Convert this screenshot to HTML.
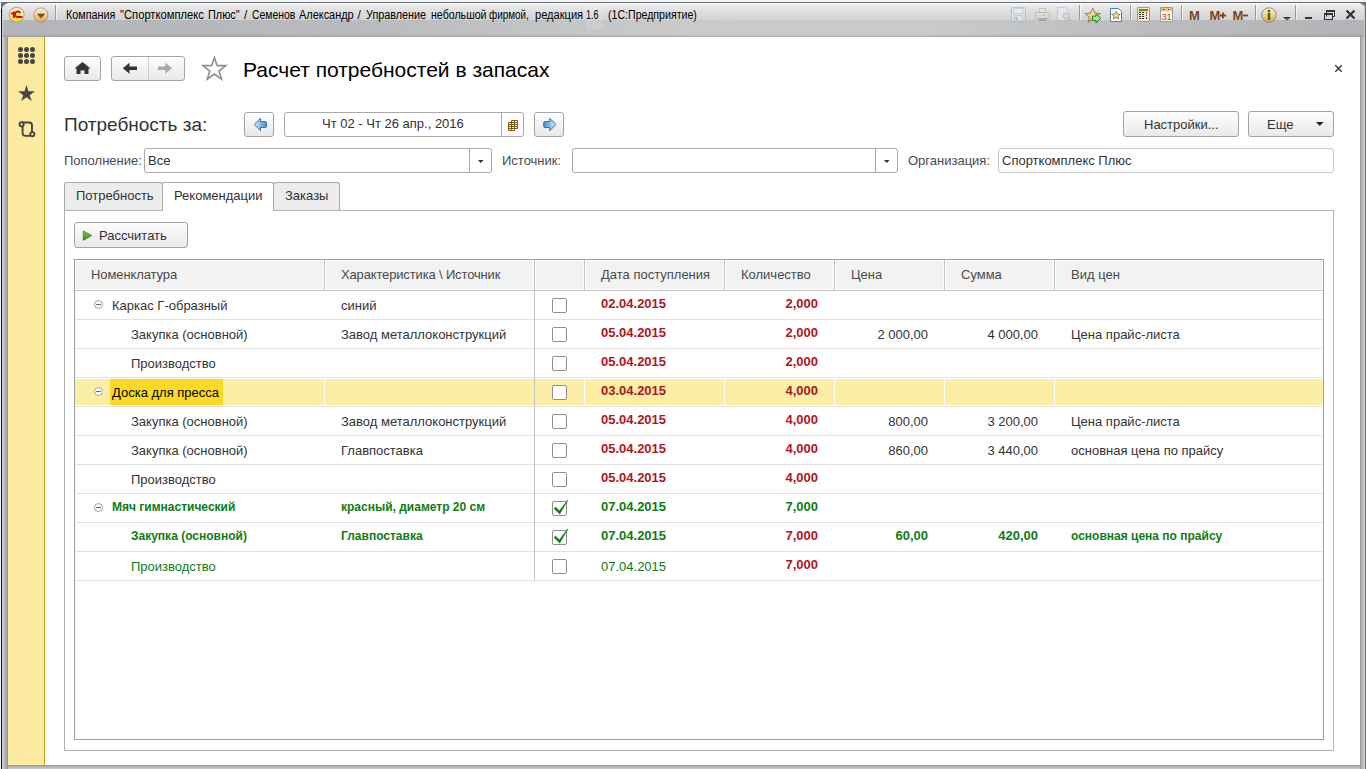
<!DOCTYPE html>
<html><head><meta charset="utf-8">
<style>
*{box-sizing:border-box;margin:0;padding:0}
html,body{width:1366px;height:769px;overflow:hidden;background:#eef3fa;font-family:"Liberation Sans",sans-serif;position:relative}
.a{position:absolute}
.t{position:absolute;white-space:nowrap;line-height:1}
#frame{left:2px;top:2px;width:1364px;height:767px;background:linear-gradient(90deg,#d2d2d2 0,#d2d2d2 1px,#c2c2c2 1px,#c2c2c2 2px,#b8b8b8 2px,#b8b8b8 3px,#b0b0b0 3px,#b0b0b0 4px,#a6a6a6 4px,#a6a6a6 5px,#979797 5px,#979797 6px,#b9babd 6px,#b9babd 1358px,#9a9a9a 1358px,#9a9a9a 1359px,#b0b0b0 1359px,#b0b0b0 1360px,#bababa 1360px,#bababa 1361px,#c4c4c4 1361px,#c4c4c4 1362px,#c8c8c8 1362px,#c8c8c8 1363px,#6e6e6e 1363px);border-top:1px solid #6e6e6e;border-radius:7px 7px 0 0}
#lline{left:1px;top:2px;width:1px;height:767px;background:#111}
#corner{left:1px;top:2px;width:7px;height:7px;background:#707070}
#corner2{left:1358px;top:2px;width:8px;height:8px;background:#6e6e6e}
#fbot{left:8px;top:765px;width:1352px;height:4px;background:linear-gradient(#9a9a9c 0,#a4a5a7 1px,#b4b5b7 2px,#c2c3c5 3px,#c8c9cb 4px)}
#tbar{left:3px;top:3px;width:1361px;height:34px;border-radius:6px 6px 0 0;background:linear-gradient(#fbfbfb 0,#e8e8e8 3px,#dcdcdc 10px,#d3d3d4 17px,transparent 17px),linear-gradient(90deg,#b4b5b8 0,#b9babd 25%,#c3c4c5 40%,#cbcbcb 52%,#cacacb 68%,#bdbec0 82%,#b2b3b6 100%)}
#tshade{left:3px;top:34px;width:1361px;height:3px;background:linear-gradient(rgba(0,0,0,0),rgba(0,0,0,0.13))}
#content{left:8px;top:37px;width:1352px;height:728px;background:#fff}
#side{left:8px;top:37px;width:36px;height:728px;background:#fbeaa0;border-right:1px solid #bea31a;width:37px}
.btn{position:absolute;border:1px solid #a4a4a4;border-radius:3px;background:linear-gradient(#fdfdfd,#e9e9e9)}
.inp{position:absolute;border:1px solid #a9a9a9;border-radius:3px;background:#fff}
.lbl{position:absolute;white-space:nowrap;font-size:13px;color:#4a4a4a;line-height:1}
.sep{position:absolute;width:1px;background:#a0a0a0}
</style></head><body>
<div id="lline" class="a"></div>
<div id="corner" class="a"></div>
<div id="corner2" class="a"></div>
<div id="frame" class="a"></div>
<div id="tbar" class="a"></div>
<div id="tshade" class="a"></div>
<div id="fbot" class="a"></div>
<div id="content" class="a"></div>
<div id="side" class="a"></div>

<!-- title bar -->
<div class="a" style="left:586px;top:7px;width:17px;height:22px;background:rgba(255,255,255,0.12)"></div>
<div class="t" style="left:66.1px;top:9px;font-size:12px;color:#000;transform:scaleX(0.9);transform-origin:0 0">Компания</div>
<div class="t" style="left:119.8px;top:9px;font-size:12px;color:#000;transform:scaleX(0.934);transform-origin:0 0">"Спорткомплекс</div>
<div class="t" style="left:208.1px;top:9px;font-size:12px;color:#000;transform:scaleX(0.907);transform-origin:0 0">Плюс"</div>
<div class="t" style="left:244.0px;top:9px;font-size:12px;color:#000;transform:scaleX(1.0);transform-origin:0 0">/</div>
<div class="t" style="left:251.5px;top:9px;font-size:12px;color:#000;transform:scaleX(0.868);transform-origin:0 0">Семенов</div>
<div class="t" style="left:299.0px;top:9px;font-size:12px;color:#000;transform:scaleX(0.911);transform-origin:0 0">Александр</div>
<div class="t" style="left:357.5px;top:9px;font-size:12px;color:#000;transform:scaleX(1.0);transform-origin:0 0">/</div>
<div class="t" style="left:365.8px;top:9px;font-size:12px;color:#000;transform:scaleX(0.901);transform-origin:0 0">Управление</div>
<div class="t" style="left:430.5px;top:9px;font-size:12px;color:#000;transform:scaleX(0.885);transform-origin:0 0">небольшой</div>
<div class="t" style="left:489.0px;top:9px;font-size:12px;color:#000;transform:scaleX(0.825);transform-origin:0 0">фирмой,</div>
<div class="t" style="left:535.2px;top:9px;font-size:12px;color:#000;transform:scaleX(0.923);transform-origin:0 0">редакция</div>
<div class="t" style="left:586.1px;top:9px;font-size:12px;color:#000;transform:scaleX(0.753);transform-origin:0 0">1.6</div>
<div class="t" style="left:607.6px;top:9px;font-size:12px;color:#000;transform:scaleX(0.883);transform-origin:0 0">(1С:Предприятие)</div>

<!-- form header -->
<div class="btn" style="left:64px;top:56px;width:37px;height:25px"></div>
<div class="btn" style="left:111px;top:56px;width:74px;height:25px"></div>
<div class="a" style="left:148px;top:57px;width:1px;height:23px;background:#cfcfcf"></div>
<div class="t" style="left:243px;top:59px;font-size:21px;color:#000">Расчет потребностей в запасах</div>

<div class="t" style="left:64px;top:115px;font-size:19px;color:#333">Потребность за:</div>
<div class="btn" style="left:244px;top:112px;width:30px;height:25px"></div>
<div class="inp" style="left:284px;top:112px;width:240px;height:25px"></div>
<div class="a" style="left:501px;top:113px;width:1px;height:23px;background:#a9a9a9"></div>
<div class="t" style="left:322px;top:117px;font-size:13px;color:#333">Чт 02 - Чт 26 апр., 2016</div>
<div class="btn" style="left:534px;top:112px;width:30px;height:25px"></div>
<div class="btn" style="left:1123px;top:111px;width:116px;height:26px"></div>
<div class="t" style="left:1144px;top:118px;font-size:13px;color:#333">Настройки...</div>
<div class="btn" style="left:1248px;top:111px;width:86px;height:26px"></div>
<div class="t" style="left:1267px;top:118px;font-size:13px;color:#333">Еще</div>

<div class="lbl" style="left:64px;top:154px">Пополнение:</div>
<div class="inp" style="left:144px;top:148px;width:348px;height:25px"></div>
<div class="a" style="left:469px;top:149px;width:1px;height:23px;background:#a9a9a9"></div>
<div class="t" style="left:148px;top:154px;font-size:13px;color:#333">Все</div>
<div class="lbl" style="left:502px;top:154px">Источник:</div>
<div class="inp" style="left:572px;top:148px;width:326px;height:25px"></div>
<div class="a" style="left:875px;top:149px;width:1px;height:23px;background:#a9a9a9"></div>
<div class="lbl" style="left:908px;top:154px">Организация:</div>
<div class="inp" style="left:998px;top:148px;width:336px;height:25px;border-color:#c8c8c8"></div>
<div class="t" style="left:1002px;top:154px;font-size:13px;color:#333">Спорткомплекс Плюс</div>

<!-- tabs & panel -->
<div class="a" style="left:64px;top:210px;width:1270px;height:541px;border:1px solid #b2b2b2"></div>


<div class="a" style="left:64px;top:182px;width:99px;height:28px;background:#ececec;border:1px solid #a9a9a9;border-bottom:none;border-radius:3px 3px 0 0"></div>
<div class="t" style="left:76px;top:189px;font-size:13px;color:#333">Потребность</div>
<div class="a" style="left:273px;top:182px;width:67px;height:28px;background:#ececec;border:1px solid #a9a9a9;border-bottom:none;border-radius:3px 3px 0 0"></div>
<div class="t" style="left:285px;top:189px;font-size:13px;color:#333">Заказы</div>
<div class="a" style="left:162px;top:182px;width:112px;height:29px;background:#fff;border:1px solid #a9a9a9;border-bottom:none;border-radius:3px 3px 0 0"></div>
<div class="t" style="left:174px;top:189px;font-size:13px;color:#333">Рекомендации</div>
<div class="btn" style="left:74px;top:222px;width:114px;height:26px"></div>
<div class="t" style="left:99px;top:229px;font-size:13px;color:#333">Рассчитать</div>
<!-- table -->
<div class="a" style="left:74px;top:259px;width:1250px;height:481px;border:1px solid #a0a0a0"></div>
<!-- TABLE START -->
<div class="a" style="left:76px;top:261px;width:247px;height:28px;background:#f2f2f2"></div>
<div class="a" style="left:326px;top:261px;width:207px;height:28px;background:#f2f2f2"></div>
<div class="a" style="left:324px;top:260px;width:1px;height:30px;background:#c4c4c4"></div>
<div class="a" style="left:536px;top:261px;width:47px;height:28px;background:#f2f2f2"></div>
<div class="a" style="left:534px;top:260px;width:1px;height:30px;background:#c4c4c4"></div>
<div class="a" style="left:586px;top:261px;width:137px;height:28px;background:#f2f2f2"></div>
<div class="a" style="left:584px;top:260px;width:1px;height:30px;background:#c4c4c4"></div>
<div class="a" style="left:726px;top:261px;width:107px;height:28px;background:#f2f2f2"></div>
<div class="a" style="left:724px;top:260px;width:1px;height:30px;background:#c4c4c4"></div>
<div class="a" style="left:836px;top:261px;width:107px;height:28px;background:#f2f2f2"></div>
<div class="a" style="left:834px;top:260px;width:1px;height:30px;background:#c4c4c4"></div>
<div class="a" style="left:946px;top:261px;width:107px;height:28px;background:#f2f2f2"></div>
<div class="a" style="left:944px;top:260px;width:1px;height:30px;background:#c4c4c4"></div>
<div class="a" style="left:1056px;top:261px;width:266px;height:28px;background:#f2f2f2"></div>
<div class="a" style="left:1054px;top:260px;width:1px;height:30px;background:#c4c4c4"></div>
<div class="a" style="left:75px;top:290px;width:1248px;height:1px;background:#c4c4c4"></div>
<div class="t" style="left:91px;top:268px;font-size:13px;color:#4a4a4a;letter-spacing:-0.1px">Номенклатура</div>
<div class="t" style="left:341px;top:268px;font-size:13px;color:#4a4a4a;letter-spacing:-0.15px">Характеристика \ Источник</div>
<div class="t" style="left:601px;top:268px;font-size:13px;color:#4a4a4a;letter-spacing:0px">Дата поступления</div>
<div class="t" style="left:741px;top:268px;font-size:13px;color:#4a4a4a;letter-spacing:0px">Количество</div>
<div class="t" style="left:851px;top:268px;font-size:13px;color:#4a4a4a;letter-spacing:0px">Цена</div>
<div class="t" style="left:961px;top:268px;font-size:13px;color:#4a4a4a;letter-spacing:0px">Сумма</div>
<div class="t" style="left:1071px;top:268px;font-size:13px;color:#4a4a4a;letter-spacing:0px">Вид цен</div>
<div class="a" style="left:75px;top:319px;width:1248px;height:1px;background:#e2e2e2"></div>
<div class="a" style="left:94px;top:300px;width:9px;height:9px;border:1px solid #a0a0a0;border-radius:50%;background:#fff"></div>
<div class="a" style="left:96px;top:304px;width:5px;height:1px;background:#666"></div>
<div class="t" style="left:112px;top:299px;font-size:13px;color:#333">Каркас Г-образный</div>
<div class="t" style="left:341px;top:299px;font-size:13px;color:#333">синий</div>
<div class="a" style="left:552px;top:298px;width:15px;height:15px;border:1px solid #8e8e8e;border-radius:2px;background:#fff"></div>
<div class="t" style="left:601px;top:297px;font-size:13px;font-weight:bold;color:#b0141e">02.04.2015</div>
<div class="t" style="right:548px;top:297px;font-size:13px;font-weight:bold;color:#b0141e">2,000</div>
<div class="a" style="left:75px;top:348px;width:1248px;height:1px;background:#e2e2e2"></div>
<div class="t" style="left:131px;top:328px;font-size:13px;color:#333">Закупка (основной)</div>
<div class="t" style="left:341px;top:328px;font-size:13px;color:#333">Завод металлоконструкций</div>
<div class="a" style="left:552px;top:327px;width:15px;height:15px;border:1px solid #8e8e8e;border-radius:2px;background:#fff"></div>
<div class="t" style="left:601px;top:326px;font-size:13px;font-weight:bold;color:#b0141e">05.04.2015</div>
<div class="t" style="right:548px;top:326px;font-size:13px;font-weight:bold;color:#b0141e">2,000</div>
<div class="t" style="right:438px;top:328px;font-size:13px;color:#333">2 000,00</div>
<div class="t" style="right:328px;top:328px;font-size:13px;color:#333">4 000,00</div>
<div class="t" style="left:1071px;top:328px;font-size:13px;color:#333">Цена прайс-листа</div>
<div class="a" style="left:75px;top:377px;width:1248px;height:1px;background:#e2e2e2"></div>
<div class="t" style="left:131px;top:357px;font-size:13px;color:#333">Производство</div>
<div class="a" style="left:552px;top:356px;width:15px;height:15px;border:1px solid #8e8e8e;border-radius:2px;background:#fff"></div>
<div class="t" style="left:601px;top:355px;font-size:13px;font-weight:bold;color:#b0141e">05.04.2015</div>
<div class="t" style="right:548px;top:355px;font-size:13px;font-weight:bold;color:#b0141e">2,000</div>
<div class="a" style="left:75px;top:379px;width:249px;height:26px;background:#fbefa6"></div>
<div class="a" style="left:325px;top:379px;width:209px;height:26px;background:#fbefa6"></div>
<div class="a" style="left:535px;top:379px;width:49px;height:26px;background:#fbefa6"></div>
<div class="a" style="left:585px;top:379px;width:139px;height:26px;background:#fbefa6"></div>
<div class="a" style="left:725px;top:379px;width:109px;height:26px;background:#fbefa6"></div>
<div class="a" style="left:835px;top:379px;width:109px;height:26px;background:#fbefa6"></div>
<div class="a" style="left:945px;top:379px;width:109px;height:26px;background:#fbefa6"></div>
<div class="a" style="left:1055px;top:379px;width:268px;height:26px;background:#fbefa6"></div>
<div class="a" style="left:534px;top:378px;width:1px;height:28px;background:#c4c4c4"></div>
<div class="a" style="left:75px;top:406px;width:1248px;height:1px;background:#e2e2e2"></div>
<div class="a" style="left:94px;top:387px;width:9px;height:9px;border:1px solid #a0a0a0;border-radius:50%;background:#fff"></div>
<div class="a" style="left:96px;top:391px;width:5px;height:1px;background:#666"></div>
<div class="a" style="left:110px;top:379px;width:113px;height:26px;background:#fbd924"></div>
<div class="t" style="left:112px;top:386px;font-size:13px;color:#000">Доска для пресса</div>
<div class="a" style="left:552px;top:385px;width:15px;height:15px;border:1px solid #8e8e8e;border-radius:2px;background:#fff"></div>
<div class="t" style="left:601px;top:384px;font-size:13px;font-weight:bold;color:#b0141e">03.04.2015</div>
<div class="t" style="right:548px;top:384px;font-size:13px;font-weight:bold;color:#b0141e">4,000</div>
<div class="a" style="left:75px;top:435px;width:1248px;height:1px;background:#e2e2e2"></div>
<div class="t" style="left:131px;top:415px;font-size:13px;color:#333">Закупка (основной)</div>
<div class="t" style="left:341px;top:415px;font-size:13px;color:#333">Завод металлоконструкций</div>
<div class="a" style="left:552px;top:414px;width:15px;height:15px;border:1px solid #8e8e8e;border-radius:2px;background:#fff"></div>
<div class="t" style="left:601px;top:413px;font-size:13px;font-weight:bold;color:#b0141e">05.04.2015</div>
<div class="t" style="right:548px;top:413px;font-size:13px;font-weight:bold;color:#b0141e">4,000</div>
<div class="t" style="right:438px;top:415px;font-size:13px;color:#333">800,00</div>
<div class="t" style="right:328px;top:415px;font-size:13px;color:#333">3 200,00</div>
<div class="t" style="left:1071px;top:415px;font-size:13px;color:#333">Цена прайс-листа</div>
<div class="a" style="left:75px;top:464px;width:1248px;height:1px;background:#e2e2e2"></div>
<div class="t" style="left:131px;top:444px;font-size:13px;color:#333">Закупка (основной)</div>
<div class="t" style="left:341px;top:444px;font-size:13px;color:#333">Главпоставка</div>
<div class="a" style="left:552px;top:443px;width:15px;height:15px;border:1px solid #8e8e8e;border-radius:2px;background:#fff"></div>
<div class="t" style="left:601px;top:442px;font-size:13px;font-weight:bold;color:#b0141e">05.04.2015</div>
<div class="t" style="right:548px;top:442px;font-size:13px;font-weight:bold;color:#b0141e">4,000</div>
<div class="t" style="right:438px;top:444px;font-size:13px;color:#333">860,00</div>
<div class="t" style="right:328px;top:444px;font-size:13px;color:#333">3 440,00</div>
<div class="t" style="left:1071px;top:444px;font-size:13px;color:#333">основная цена по прайсу</div>
<div class="a" style="left:75px;top:493px;width:1248px;height:1px;background:#e2e2e2"></div>
<div class="t" style="left:131px;top:473px;font-size:13px;color:#333">Производство</div>
<div class="a" style="left:552px;top:472px;width:15px;height:15px;border:1px solid #8e8e8e;border-radius:2px;background:#fff"></div>
<div class="t" style="left:601px;top:471px;font-size:13px;font-weight:bold;color:#b0141e">05.04.2015</div>
<div class="t" style="right:548px;top:471px;font-size:13px;font-weight:bold;color:#b0141e">4,000</div>
<div class="a" style="left:75px;top:522px;width:1248px;height:1px;background:#e2e2e2"></div>
<div class="a" style="left:94px;top:503px;width:9px;height:9px;border:1px solid #a0a0a0;border-radius:50%;background:#fff"></div>
<div class="a" style="left:96px;top:507px;width:5px;height:1px;background:#666"></div>
<div class="t" style="left:112px;top:501px;font-size:12px;font-weight:bold;color:#0e7c14">Мяч гимнастический</div>
<div class="t" style="left:341px;top:501px;font-size:12px;font-weight:bold;color:#0e7c14">красный, диаметр 20 см</div>
<div class="a" style="left:552px;top:501px;width:15px;height:15px;border:1px solid #8e8e8e;border-radius:2px;background:#fff"></div>
<svg class="a" style="left:552px;top:498px" width="18" height="18" viewBox="0 0 18 18"><path d="M2 10.4 L3.6 9.2 L7.4 12.9 L15.9 1.9 L7.7 16 Z" fill="#0e7c14" stroke="#0e7c14" stroke-width="0.7" stroke-linejoin="round"/></svg>
<div class="t" style="left:601px;top:500px;font-size:13px;font-weight:bold;color:#0e7c14">07.04.2015</div>
<div class="t" style="right:548px;top:500px;font-size:13px;font-weight:bold;color:#0e7c14">7,000</div>
<div class="a" style="left:75px;top:551px;width:1248px;height:1px;background:#e2e2e2"></div>
<div class="t" style="left:131px;top:530px;font-size:12px;font-weight:bold;color:#0e7c14">Закупка (основной)</div>
<div class="t" style="left:341px;top:530px;font-size:12px;font-weight:bold;color:#0e7c14">Главпоставка</div>
<div class="a" style="left:552px;top:530px;width:15px;height:15px;border:1px solid #8e8e8e;border-radius:2px;background:#fff"></div>
<svg class="a" style="left:552px;top:527px" width="18" height="18" viewBox="0 0 18 18"><path d="M2 10.4 L3.6 9.2 L7.4 12.9 L15.9 1.9 L7.7 16 Z" fill="#0e7c14" stroke="#0e7c14" stroke-width="0.7" stroke-linejoin="round"/></svg>
<div class="t" style="left:601px;top:529px;font-size:13px;font-weight:bold;color:#0e7c14">07.04.2015</div>
<div class="t" style="right:548px;top:529px;font-size:13px;font-weight:bold;color:#b0141e">7,000</div>
<div class="t" style="right:438px;top:529px;font-size:13px;font-weight:bold;color:#0e7c14">60,00</div>
<div class="t" style="right:328px;top:529px;font-size:13px;font-weight:bold;color:#0e7c14">420,00</div>
<div class="t" style="left:1071px;top:530px;font-size:12px;font-weight:bold;color:#0e7c14">основная цена по прайсу</div>
<div class="a" style="left:75px;top:580px;width:1248px;height:1px;background:#e2e2e2"></div>
<div class="t" style="left:131px;top:560px;font-size:13px;color:#0e7c14">Производство</div>
<div class="a" style="left:552px;top:559px;width:15px;height:15px;border:1px solid #8e8e8e;border-radius:2px;background:#fff"></div>
<div class="t" style="left:601px;top:560px;font-size:13px;color:#0e7c14">07.04.2015</div>
<div class="t" style="right:548px;top:558px;font-size:13px;font-weight:bold;color:#b0141e">7,000</div>
<div class="a" style="left:534px;top:291px;width:1px;height:290px;background:#c4c4c4"></div>
<!-- TABLE END -->
<!-- ICONS START -->
<!-- sidebar -->
<svg class="a" style="left:8px;top:37px" width="36" height="110" viewBox="8 37 36 110">
 <g fill="#464646">
  <circle cx="20.5" cy="49.5" r="2.5"/><circle cx="26.5" cy="49.5" r="2.5"/><circle cx="32.5" cy="49.5" r="2.5"/>
  <circle cx="20.5" cy="55.5" r="2.5"/><circle cx="26.5" cy="55.5" r="2.5"/><circle cx="32.5" cy="55.5" r="2.5"/>
  <circle cx="20.5" cy="61.5" r="2.5"/><circle cx="26.5" cy="61.5" r="2.5"/><circle cx="32.5" cy="61.5" r="2.5"/>
  <path d="M26.5 85 L28.4 91.3 L34.9 91.3 L29.7 95.2 L31.8 101 L26.5 97.2 L21.2 101 L23.3 95.2 L18.1 91.3 L24.6 91.3 Z"/>
 </g>
 <g fill="none" stroke="#464646" stroke-width="1.9">
  <path d="M21.6 122.5 L29.3 122.5 Q32 122.5 32 125.2 L32 132.2 M30.2 135.9 L25.4 135.9 Q22.6 135.9 22.6 133.1 L22.6 124.8"/>
  <circle cx="21.6" cy="124.3" r="2.1" fill="#fbeaa0"/>
  <circle cx="32.3" cy="134.2" r="2.1" fill="#fbeaa0"/>
 </g>
</svg>
<!-- title bar icons -->
<svg class="a" style="left:0;top:0" width="1366" height="37" viewBox="0 0 1366 37">
 <defs>
  <linearGradient id="g1c" x1="0" y1="0" x2="0" y2="1"><stop offset="0" stop-color="#fff8d8"/><stop offset="0.55" stop-color="#fff27a"/><stop offset="1" stop-color="#f4e000"/></linearGradient>
  <linearGradient id="gor" x1="0" y1="0" x2="0" y2="1"><stop offset="0" stop-color="#fff0d8"/><stop offset="0.5" stop-color="#f8cf8c"/><stop offset="1" stop-color="#f4a630"/></linearGradient>
  <linearGradient id="gtri" x1="0" y1="0" x2="0" y2="1"><stop offset="0" stop-color="#4a4030"/><stop offset="1" stop-color="#a08860"/></linearGradient>
  <linearGradient id="gdd" x1="0" y1="0" x2="0" y2="1"><stop offset="0" stop-color="#222"/><stop offset="1" stop-color="#888"/></linearGradient>
 </defs>
 <circle cx="16.7" cy="14.8" r="7.4" fill="url(#g1c)" stroke="#b08878" stroke-width="0.9"/>
 <path d="M10.9 13.2 L13.4 11.6 L14.6 11.6 L14.6 17.9 L12.8 17.9 L12.8 13.9 L10.9 14.7 Z" fill="#e00000"/>
 <path d="M20.3 13.3 A2.75 2.75 0 1 0 17.6 17 L22.4 17" fill="none" stroke="#e00000" stroke-width="1.8"/>
 <circle cx="40.9" cy="15" r="7.1" fill="url(#gor)" stroke="#8c8c98" stroke-width="0.8"/>
 <path d="M37 13.8 L45 13.8 L41 19 Z" fill="url(#gtri)"/>
 <g fill="#9c9c9c"><rect x="55" y="5" width="1" height="15"/><rect x="1079" y="5" width="1" height="15"/><rect x="1130" y="5" width="1" height="15"/><rect x="1181" y="5" width="1" height="15"/><rect x="1255" y="5" width="1" height="15"/><rect x="1295" y="5" width="1" height="15"/></g>
 <g fill="#fafafa" opacity="0.8"><rect x="56" y="5" width="1" height="15"/><rect x="1080" y="5" width="1" height="15"/><rect x="1131" y="5" width="1" height="15"/><rect x="1182" y="5" width="1" height="15"/><rect x="1256" y="5" width="1" height="15"/><rect x="1296" y="5" width="1" height="15"/></g>
 <!-- faded save -->
 <g opacity="0.55">
  <rect x="1011.5" y="7.5" width="14" height="14" rx="1" fill="#d8e4ee" stroke="#8fb0cc"/>
  <rect x="1014" y="8.5" width="9" height="5" fill="#eef4f8" stroke="#9fbcd4" stroke-width="0.8"/>
  <rect x="1014.5" y="15.5" width="8" height="5.5" fill="#f2f2f2" stroke="#9fbcd4" stroke-width="0.8"/>
  <rect x="1015.5" y="17" width="2" height="3" fill="#7a9cc0"/>
 </g>
 <g opacity="0.55">
  <rect x="1039.5" y="8.5" width="6" height="5" fill="#e4ecf2" stroke="#8fb0cc"/>
  <rect x="1035.5" y="12.5" width="14" height="6" rx="1" fill="#f0d8c0" stroke="#9a9a9a"/>
  <rect x="1038.5" y="18" width="8" height="3" fill="#888"/>
  <rect x="1043" y="15" width="2" height="1" fill="#4c4"/>
 </g>
 <g opacity="0.55">
  <path d="M1057.5 7.5 L1065.5 7.5 L1068.5 10.5 L1068.5 20.5 L1057.5 20.5 Z" fill="#e8eef4" stroke="#9fbcd4"/>
  <circle cx="1066" cy="16" r="3" fill="#c8dcf0" stroke="#c0a080"/>
  <path d="M1068 18 L1071 21" stroke="#c0a080" stroke-width="1.6"/>
 </g>
 <!-- star + arrow -->
 <defs><linearGradient id="gst" x1="0" y1="0" x2="0" y2="1"><stop offset="0" stop-color="#fff0c0"/><stop offset="1" stop-color="#f4b040"/></linearGradient></defs>
 <path d="M1092.8 8.2 L1095 13.1 L1100.4 13.6 L1096.3 17.1 L1097.6 22.3 L1092.8 19.5 L1088 22.3 L1089.3 17.1 L1085.2 13.6 L1090.6 13.1 Z" fill="url(#gst)" stroke="#6a6a6a" stroke-width="0.8"/>
 <path d="M1092.5 16.2 L1096 16.2 L1096 14 L1100.8 18.3 L1096 22.6 L1096 20.4 L1092.5 20.4 Z" fill="#a8e890" stroke="#1a7a1a" stroke-width="0.9"/>
 <!-- doc star -->
 <path d="M1110.5 8.5 L1118.5 8.5 L1121.5 11.5 L1121.5 21.5 L1110.5 21.5 Z" fill="#fff" stroke="#5a7ca0"/>
 <path d="M1116 11 L1117.3 14 L1120.3 14.2 L1118 16.2 L1118.8 19.2 L1116 17.5 L1113.2 19.2 L1114 16.2 L1111.7 14.2 L1114.7 14 Z" fill="url(#gst)" stroke="#555" stroke-width="0.6"/>
 <!-- calculator -->
 <rect x="1137.5" y="7.5" width="12" height="14" rx="0.5" fill="#fde6c4" stroke="#8aa0b0"/>
 <rect x="1139" y="9" width="9" height="2.2" fill="#3aa028"/>
 <g fill="#333"><rect x="1139" y="12" width="2" height="1"/><rect x="1142" y="12" width="2" height="1"/><rect x="1139" y="14" width="2" height="1"/><rect x="1142" y="14" width="2" height="1"/><rect x="1139" y="16" width="2" height="1"/><rect x="1142" y="16" width="2" height="1"/><rect x="1139" y="18" width="2" height="1"/><rect x="1142" y="18" width="2" height="1"/><rect x="1146" y="15" width="1" height="1"/><rect x="1146" y="17" width="1" height="2"/></g>
 <rect x="1146" y="12" width="1" height="2" fill="#e02020"/>
 <!-- calendar -->
 <rect x="1160.5" y="7.5" width="12" height="14" rx="0.5" fill="#fffaf0" stroke="#8aa0b0"/>
 <rect x="1161" y="8" width="11" height="3.2" fill="#e6bf78"/>
 <g fill="#3a2a10"><rect x="1163" y="9" width="1" height="1"/><rect x="1168" y="9" width="1" height="1"/></g>
 <text x="1166.5" y="20.3" font-family="Liberation Sans" font-size="9.5" fill="#e02a10" text-anchor="middle" letter-spacing="-0.3">31</text>
 <!-- M M+ M- -->
 <g font-family="Liberation Sans" font-weight="bold" font-size="13" fill="#7c4418">
  <text x="1189" y="20">M</text>
  <text x="1209.5" y="20">M</text>
  <text x="1232.5" y="20">M</text>
 </g>
 <path d="M1220 15.5 L1226 15.5 M1223 12.5 L1223 18.5" stroke="#7c4418" stroke-width="1.8"/>
 <path d="M1243 15.5 L1248 15.5" stroke="#7c4418" stroke-width="1.8"/>
 <!-- info -->
 <circle cx="1269" cy="15" r="7.2" fill="url(#gor)" stroke="#777" stroke-width="0.8"/>
 <rect x="1267.8" y="10" width="2.4" height="2.2" fill="#1a7a10"/>
 <rect x="1267.8" y="13" width="2.4" height="7" fill="#1a7a10"/>
 <path d="M1283 17 L1291 17 L1287 20.8 Z" fill="url(#gdd)"/>
 <!-- window controls -->
 <rect x="1305" y="17" width="7" height="2" fill="#333"/>
 <g fill="none" stroke="#333">
  <path d="M1326.5 16.5 L1326.5 10.5 L1334.5 10.5 L1334.5 16.5 L1332.5 16.5"/>
  <rect x="1324.5" y="13.5" width="8" height="6"/>
 </g>
 <rect x="1326" y="10" width="9" height="2" fill="#333"/>
 <rect x="1324" y="13" width="9" height="2" fill="#333"/>
 <path d="M1346.5 10.5 L1354.5 18.5 M1354.5 10.5 L1346.5 18.5" stroke="#333" stroke-width="2.2"/>
</svg>
<!-- form icons -->
<svg class="a" style="left:44px;top:37px" width="1316" height="220" viewBox="44 37 1316 220">
 <defs>
  <linearGradient id="gbl" x1="0" y1="0" x2="1" y2="0"><stop offset="0" stop-color="#cfeefc"/><stop offset="1" stop-color="#3c8ed0"/></linearGradient>
  <linearGradient id="gbr" x1="1" y1="0" x2="0" y2="0"><stop offset="0" stop-color="#cfeefc"/><stop offset="1" stop-color="#3c8ed0"/></linearGradient>
  <linearGradient id="gpl" x1="0" y1="0" x2="0" y2="1"><stop offset="0" stop-color="#8ad050"/><stop offset="1" stop-color="#2a8a10"/></linearGradient>
 </defs>
 <!-- home -->
 <path d="M82.5 62 L90.5 68.6 L88.5 68.6 L88.5 74 L84.5 74 L84.5 70.5 L80.5 70.5 L80.5 74 L76.5 74 L76.5 68.6 L74.5 68.6 Z" fill="#333"/>
 <!-- back -->
 <path d="M122.8 68.3 L129.5 62.8 L129.5 66.6 L137 66.6 L137 70 L129.5 70 L129.5 73.8 Z" fill="#333"/>
 <path d="M172 68.3 L165.3 62.8 L165.3 66.6 L158 66.6 L158 70 L165.3 70 L165.3 73.8 Z" fill="#aaa"/>
 <!-- star outline -->
 <path d="M214.4 57.6 L217.2 65.6 L225.8 65.6 L219 71.1 L221.6 79.2 L214.4 74 L207.2 79.2 L209.8 71.1 L203 65.6 L211.6 65.6 Z" fill="none" stroke="#8f8f8f" stroke-width="1.6" stroke-linejoin="miter"/>
 <!-- close -->
 <path d="M1335.3 65.3 L1341.7 71.7 M1341.7 65.3 L1335.3 71.7" stroke="#333" stroke-width="1.3"/>
 <!-- left blue arrow -->
 <path d="M254.2 124.5 L260.5 118.3 L260.5 121.5 L265.5 121.5 Q266.5 121.5 266.5 122.5 L266.5 126.5 Q266.5 127.5 265.5 127.5 L260.5 127.5 L260.5 130.7 Z" fill="url(#gbl)" stroke="#3a6a94" stroke-width="0.9"/>
 <path d="M556 124.5 L549.7 118.3 L549.7 121.5 L544.7 121.5 Q543.7 121.5 543.7 122.5 L543.7 126.5 Q543.7 127.5 544.7 127.5 L549.7 127.5 L549.7 130.7 Z" fill="url(#gbr)" stroke="#3a6a94" stroke-width="0.9"/>
 <!-- calendar btn icon -->
 <g fill="none" stroke="#7a5a10" stroke-width="1">
  <path d="M508.5 122.5 L511.5 122.5 L511.5 120.5 L517.5 120.5 L517.5 128.5 L514.5 128.5 L514.5 130.5 L508.5 130.5 Z"/>
  <path d="M508.5 124.5 L517.5 124.5 M508.5 126.5 L517.5 126.5 M508.5 128.5 L514.5 128.5 M511.5 122.5 L517.5 122.5 M511.5 122.5 L511.5 130.5 M514.5 120.5 L514.5 128.5"/>
 </g>
 <!-- dropdown triangles -->
 <path d="M478 160 L483.5 160 L480.75 163 Z" fill="#333"/>
 <path d="M884 160 L889.5 160 L886.75 163 Z" fill="#333"/>
 <path d="M1316 122 L1323.5 122 L1319.75 126 Z" fill="#222"/>
 <!-- play -->
 <path d="M83.2 230.8 L91.8 235.6 L83.2 240.4 Z" fill="url(#gpl)" stroke="#3a6a2a" stroke-width="0.6"/>
</svg>
<!-- ICONS END -->
</body></html>
